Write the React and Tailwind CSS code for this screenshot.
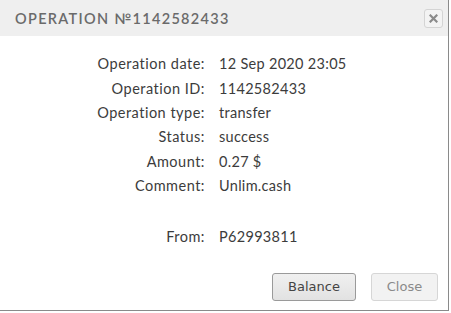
export default function App() {
  const rows = [
    ["Operation date:", "12 Sep 2020 23:05"],
    ["Operation ID:", "1142582433"],
    ["Operation type:", "transfer"],
    ["Status:", "success"],
    ["Amount:", "0.27 $"],
    ["Comment:", "Unlim.cash"],
  ];
  return (
    <div className="w-[451px] h-[313px] bg-white">
      <div className="w-[449px] h-[311px] border-r border-b border-[#8a8a8a] bg-white flex flex-col">
        <div className="h-[36px] bg-[#efefef] flex items-center justify-between pl-[15px] pr-[5px]">
          <span className="text-[14.5px] tracking-[0.09em] text-[#6a6a6a] font-['Lato',sans-serif] font-semibold pt-[1px]">
            OPERATION №1142582433
          </span>
          <div className="w-[19px] h-[19px] border border-[#d4d4d4] rounded-[3px] bg-[#f3f3f3] flex items-center justify-center">
            <svg width="9" height="9" viewBox="0 0 9 9">
              <path d="M1.5 1.5 L7.5 7.5 M7.5 1.5 L1.5 7.5" stroke="#8a8a8a" strokeWidth="2.2" strokeLinecap="square" />
            </svg>
          </div>
        </div>
        <div className="flex flex-col pt-[16px] font-['Lato',sans-serif] text-[14.5px] text-[#3c3c3c]">
          {rows.map(([k, v]) => (
            <div key={k} className="flex h-[24.4px] items-center">
              <div className="w-[205px] text-right tracking-[0.5px]">{k}</div>
              <div className="pl-[14px] tracking-[0.3px]">{v}</div>
            </div>
          ))}
          <div className="h-[27px]" />
          <div className="flex h-[24px] items-center">
            <div className="w-[205px] text-right tracking-[0.5px]">From:</div>
            <div className="pl-[14px] tracking-[0.3px]">P62993811</div>
          </div>
        </div>
        <div className="flex justify-end gap-[15px] pr-[10px] mt-auto mb-[9px] font-['DejaVu_Sans',sans-serif] text-[13px]">
          <button className="w-[84px] h-[28px] rounded-[3px] border border-[#9a9a9a] bg-gradient-to-b from-[#f0f0f0] to-[#e2e2e2] text-[#444]">
            Balance
          </button>
          <button className="w-[67px] h-[28px] rounded-[3px] border border-[#d6d6d6] bg-[#f2f2f2] text-[#8a8a8a]">
            Close
          </button>
        </div>
      </div>
    </div>
  );
}
